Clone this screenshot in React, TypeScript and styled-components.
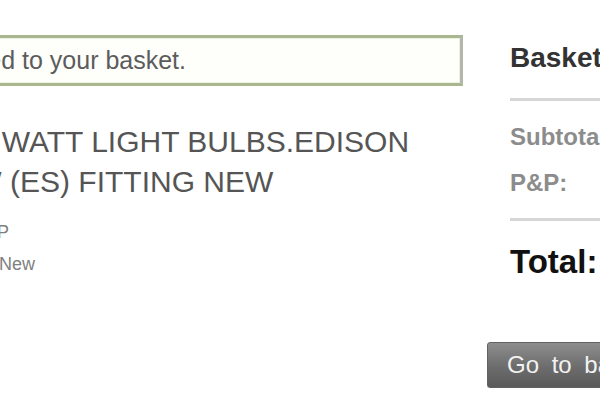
import React from 'react';
import styled, { createGlobalStyle } from 'styled-components';

const GlobalStyle = createGlobalStyle`
  html, body {
    margin: 0;
    padding: 0;
    background: #ffffff;
    overflow: hidden;
  }
  body {
    font-family: "Liberation Sans", Arial, sans-serif;
  }
`;

const Page = styled.div`
  display: flex;
  align-items: flex-start;
  gap: 24px;
  width: 860px;
  margin-left: -123px;
  padding-top: 35px;
`;

const MainColumn = styled.div`
  width: 586px;
  flex-shrink: 0;
`;

const Notice = styled.div`
  border: 3px solid #a9b68f;
  border-right-color: #b3b6aa;
  box-shadow: inset 0 0 0 1px #eaf1dc;
  background: #fefffb;
  padding: 0 10px;
  font-size: 25px;
  line-height: 45px;
  color: #5c5c5c;
  white-space: nowrap;
`;

const Title = styled.h1`
  margin: 36px 0 0;
  padding-left: 13px;
  font-size: 30px;
  font-weight: normal;
  line-height: 40px;
  color: #555555;
`;

const Details = styled.div`
  margin-top: 14px;
  padding-left: 13px;
  font-size: 18px;
  line-height: 32px;
  color: #808080;
`;

const DetailLine = styled.div`
  white-space: nowrap;
`;

const Label = styled.span`
  display: inline-block;
  width: 109px;
`;

const Summary = styled.aside`
  width: 250px;
  flex-shrink: 0;
  padding-top: 7px;
`;

const SummaryBody = styled.div`
  padding: 0 23px;
`;

const SummaryTitle = styled.h2`
  margin: 0;
  font-size: 28px;
  font-weight: bold;
  line-height: 32px;
  color: #333333;
  white-space: nowrap;
`;

const Divider = styled.hr<{ $top: number }>`
  margin: ${(p) => p.$top}px 0 0;
  border: 0;
  height: 3px;
  background: #d6d6d6;
`;

const Rows = styled.div`
  display: flex;
  flex-direction: column;
  gap: 14px;
  margin-top: 20px;
`;

const Row = styled.div<{ $total?: boolean }>`
  display: flex;
  justify-content: space-between;
  font-size: ${(p) => (p.$total ? 33 : 24)}px;
  line-height: ${(p) => (p.$total ? 40 : 32)}px;
  font-weight: bold;
  color: ${(p) => (p.$total ? '#111111' : '#8c8c8c')};
  white-space: nowrap;
`;

const TotalRow = styled(Row)`
  margin-top: 21px;
`;

const BasketButton = styled.button`
  margin-top: 60px;
  height: 46px;
  padding: 0 19px;
  border: 1px solid #626262;
  border-radius: 3px;
  background: linear-gradient(#8e8e8e, #6c6c6c 55%, #5a5a5a);
  box-shadow: 0 1px 0 #d8d8d8;
  font-family: "Liberation Sans", Arial, sans-serif;
  font-size: 24px;
  word-spacing: 6px;
  color: #f2f2f2;
  white-space: nowrap;
  cursor: pointer;
`;

export default function App() {
  return (
    <>
      <GlobalStyle />
      <Page>
        <MainColumn>
          <Notice>Item added to your basket.</Notice>
          <Title>10 X 40 WATT LIGHT BULBS.EDISON SCREW (ES) FITTING NEW</Title>
          <Details>
            <DetailLine>Price incl. P&amp;P</DetailLine>
            <DetailLine>
              <Label>Condition:</Label>New
            </DetailLine>
          </Details>
        </MainColumn>

        <Summary>
          <SummaryBody>
            <SummaryTitle>Basket summary</SummaryTitle>
            <Divider $top={24} />
            <Rows>
              <Row>
                <span>Subtotal:</span>
                <span>£3.99</span>
              </Row>
              <Row>
                <span>P&amp;P:</span>
                <span>£0.00</span>
              </Row>
            </Rows>
            <Divider $top={19} />
            <TotalRow $total>
              <span>Total:</span>
              <span>£3.99</span>
            </TotalRow>
          </SummaryBody>
          <BasketButton type="button">Go to basket</BasketButton>
        </Summary>
      </Page>
    </>
  );
}
